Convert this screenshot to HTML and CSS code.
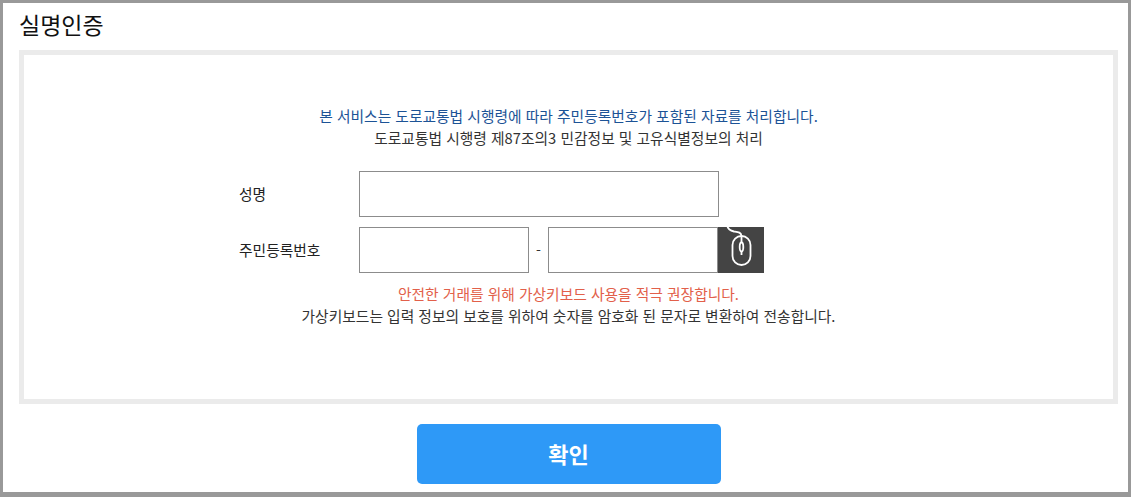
FILE: index.html
```html
<!DOCTYPE html>
<html lang="ko">
<head>
    <meta charset="UTF-8">
    <meta name="viewport" content="width=device-width, initial-scale=1.0">
    <title>실명인증</title>
    <link rel="stylesheet" href="styles.css">
</head>
<body>
    <div class="popup">
        <h1 class="title">실명인증</h1>
        <div class="box">
            <p class="notice">본 서비스는 도로교통법 시행령에 따라 주민등록번호가 포함된 자료를 처리합니다.</p>
            <p class="desc">도로교통법 시행령 제87조의3 민감정보 및 고유식별정보의 처리</p>
            <div class="form">
                <div class="row">
                    <label class="label">성명</label>
                    <input class="inp inp_name" type="text">
                </div>
                <div class="row">
                    <label class="label">주민등록번호</label>
                    <input class="inp inp_jumin" type="text">
                    <span class="dash">-</span>
                    <input class="inp inp_jumin" type="text">
                    <span class="keypad">
                        <svg width="46" height="46" viewBox="0 0 46 46" fill="none" stroke="#fff" stroke-width="1.8">
                            <path d="M9 -2 C10 3 13 4 16 4.500 C20 5 23 5 23.500 9"/>
                            <rect x="14.500" y="9" width="18" height="29" rx="9"/>
                            <path d="M23.500 9 V15"/>
                            <ellipse cx="23.500" cy="20" rx="1.800" ry="4.500"/>
                            <path d="M23.500 24.500 V28"/>
                        </svg>
                    </span>
                </div>
            </div>
            <p class="warn">안전한 거래를 위해 가상키보드 사용을 적극 권장합니다.</p>
            <p class="desc">가상키보드는 입력 정보의 보호를 위하여 숫자를 암호화 된 문자로 변환하여 전송합니다.</p>
        </div>
        <button class="btn_ok" type="button">확인</button>
    </div>
</body>
</html>
```

FILE: styles.css
```css
*{
  margin: 0;
  padding: 0;
  box-sizing: border-box;
}
html,
body {
  height: 100%;
  background-color: #fff;
}
body {
  font-family: "Noto Sans CJK KR", "Noto Sans", sans-serif;
  overflow: hidden;
}
.popup {
  display: flex;
  flex-direction: column;
  align-items: center;
  width: 1131px;
  height: 497px;
  padding: 0 10px 0 16px;
  border: 3px solid #999;
  border-bottom-width: 5px;
}
.title {
  align-self: flex-start;
  height: 47px;
  line-height: 42px;
  font-size: 23px;
  font-weight: 400;
  color: #111;
}
.box {
  display: flex;
  flex-direction: column;
  align-items: center;
  width: 100%;
  height: 354px;
  padding-top: 50px;
  border: 5px solid #ebebeb;
}
.notice,
.desc,
.warn {
  height: 22px;
  line-height: 22px;
  font-size: 14.75px;
  color: #333;
}
.notice {
  color: #1c5396;
}
.warn {
  color: #e2604a;
}
.form {
  align-self: flex-start;
  width: 525px;
  margin: 22px 0 10px 215px;
}
.row {
  display: flex;
  align-items: center;
  height: 46px;
  margin-bottom: 10px;
}
.row:last-child {
  margin-bottom: 0;
}
.label {
  width: 120px;
  padding-bottom: 2px;
  font-size: 14.75px;
  color: #222;
}
.inp {
  height: 46px;
  border: 1px solid #8c8c8c;
  background-color: #fff;
  outline: none;
}
.inp_name {
  width: 360px;
}
.inp_jumin {
  width: 170px;
}
.dash {
  width: 19px;
  text-align: center;
  font-size: 14px;
  color: #333;
}
.keypad {
  display: block;
  width: 46px;
  height: 46px;
  background-color: #444;
}
.keypad svg {
  display: block;
  overflow: visible;
}
.btn_ok {
  width: 304px;
  height: 60px;
  margin-top: 20px;
  padding-bottom: 3px;
  border: 0;
  border-radius: 5px;
  background-color: #2e99f7;
  font-family: inherit;
  font-size: 22px;
  font-weight: 700;
  color: #fff;
}
```
